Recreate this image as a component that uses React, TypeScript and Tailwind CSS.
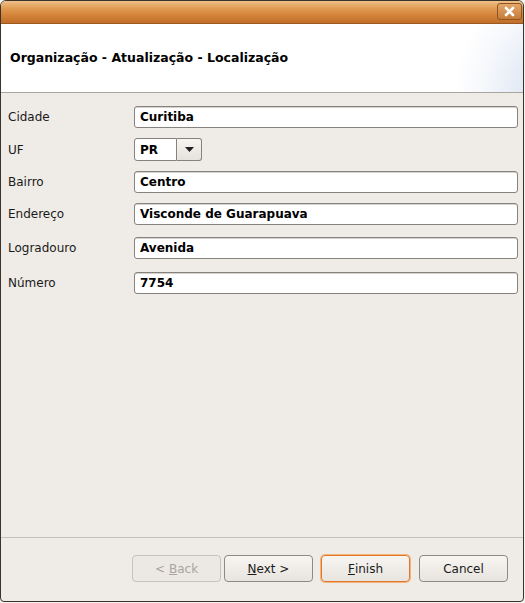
import { ReactNode } from 'react';

const font = { fontFamily: '"DejaVu Sans", Verdana, sans-serif' };

function Field({ value }: { value: string }) {
    return (
        <div className="h-[22px] bg-white border border-[#86827d] rounded-[3px] flex items-center pl-[5px] text-[12px] font-bold text-black shadow-[inset_0_1px_0_#d6d3cf]">
            {value}
        </div>
    );
}

function Row({ label, children, className }: { label: string; children: ReactNode; className?: string }) {
    return (
        <div className={`grid grid-cols-[126px_1fr] items-center ${className ?? ''}`}>
            <span className="text-[12px] text-[#1a1a1a]">{label}</span>
            {children}
        </div>
    );
}

function Button({ children, disabled, focused }: { children: ReactNode; disabled?: boolean; focused?: boolean }) {
    return (
        <div
            className={[
                'w-[89px] h-[27px] rounded-[4px] flex items-center justify-center text-[12px] border',
                disabled
                    ? 'border-[#c6c2bd] text-[#a8a5a0] bg-[#ece8e4]'
                    : focused
                        ? 'border-[#e0782a] text-[#1a1a1a] bg-gradient-to-b from-[#f7f5f2] to-[#e8e4df] shadow-[0_0_0_1px_#f3b47d]'
                        : 'border-[#8d8984] text-[#1a1a1a] bg-gradient-to-b from-[#f7f5f2] to-[#e8e4df]',
            ].join(' ')}
        >
            {children}
        </div>
    );
}

export default function App() {
    return (
        <div className="w-[525px] h-[603px] bg-[#f4f2ef]" style={font}>
            <div className="w-[524px] h-[602px] flex flex-col border border-[#3b342c] rounded-t-[6px] rounded-b-[4px] overflow-hidden bg-[#efebe7]">
                {/* Title bar */}
                <div className="h-[23px] shrink-0 flex justify-end items-start pt-[2px] pr-[1px] bg-[linear-gradient(to_bottom,#efc08a_0%,#e09a52_35%,#d3833a_65%,#c06e29_100%)] border-b border-[#9a5a1f]">
                    <div className="w-[25px] h-[17px] rounded-[3px] border border-[#8e5520] bg-gradient-to-b from-[#e4a76a] to-[#c57b37] flex items-center justify-center">
                        <svg width="11" height="11" viewBox="0 0 11 11">
                            <path d="M2 2 L9 9 M9 2 L2 9" stroke="#fff" strokeWidth="2.6" strokeLinecap="round" />
                        </svg>
                    </div>
                </div>

                {/* Header */}
                <div className="h-[69px] shrink-0 bg-[radial-gradient(ellipse_110px_120px_at_108%_105%,#d9e2f1_0%,#e6ecf6_45%,#f6f8fc_75%,#ffffff_100%)] border-b border-[#a9a59f] flex items-center pl-[9px]">
                    <span className="text-[12.5px] font-bold text-black">Organização - Atualização - Localização</span>
                </div>

                {/* Form */}
                <div className="flex-1 flex flex-col pl-[7px] pr-[5px] pt-[13px]">
                    <Row label="Cidade">
                        <Field value="Curitiba" />
                    </Row>
                    <Row label="UF" className="mt-[10px]">
                        <div className="flex h-[23px]">
                            <div className="w-[43px] bg-white border border-[#86827d] rounded-l-[3px] flex items-center pl-[5px] text-[12px] font-bold">PR</div>
                            <div className="w-[25px] border border-l-0 border-[#86827d] rounded-r-[3px] bg-gradient-to-b from-[#f6f4f1] to-[#e6e2dd] flex items-center justify-center">
                                <svg width="9" height="5" viewBox="0 0 9 5">
                                    <path d="M0 0 H9 L4.5 5 Z" fill="#222" />
                                </svg>
                            </div>
                        </div>
                    </Row>
                    <Row label="Bairro" className="mt-[10px]">
                        <Field value="Centro" />
                    </Row>
                    <Row label="Endereço" className="mt-[10px]">
                        <Field value="Visconde de Guarapuava" />
                    </Row>
                    <Row label="Logradouro" className="mt-[12px]">
                        <Field value="Avenida" />
                    </Row>
                    <Row label="Número" className="mt-[13px]">
                        <Field value="7754" />
                    </Row>
                </div>

                {/* Footer */}
                <div className="h-[64px] shrink-0 border-t border-[#c4c0bb] flex justify-end items-start pt-[17px] pr-[15px]">
                    <div className="flex">
                        <div className="w-[91px]">
                            <Button disabled>&lt; <u className="ml-[4px]">B</u>ack</Button>
                        </div>
                        <div className="ml-[1px]">
                            <Button><u>N</u>ext &gt;</Button>
                        </div>
                        <div className="ml-[8px]">
                            <Button focused><u>F</u>inish</Button>
                        </div>
                        <div className="ml-[9px]">
                            <Button>Cancel</Button>
                        </div>
                    </div>
                </div>
            </div>
        </div>
    );
}
